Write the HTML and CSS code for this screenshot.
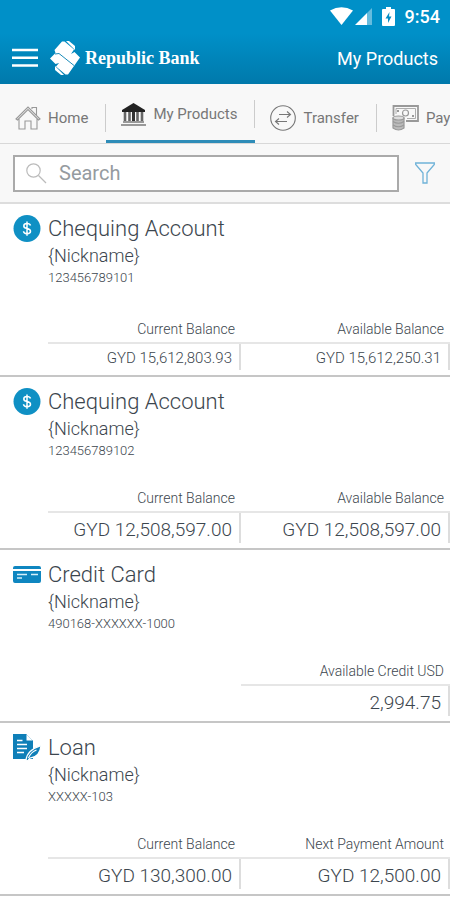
FILE: index.html
```
<!DOCTYPE html>
<html lang="en">
<head>
    <meta charset="UTF-8">
    <meta name="viewport" content="width=device-width, initial-scale=1.0">
    <title>My Products</title>
    <link rel="stylesheet" href="styles.css">
</head>
<body>
    <header class="header">
        <div class="status">
            <svg width="23" height="18" viewBox="0 0 23 18"><path d="M0 3.5Q11.500-3 23 3.500L11.500 18Z" fill="#fff"/></svg>
            <svg width="17" height="17" viewBox="0 0 17 17"><path d="M17 0V17H12V5Z" fill="#fff" opacity=".4"/><path d="M0 17L12 5V17Z" fill="#fff"/></svg>
            <svg class="battery" width="13" height="19" viewBox="0 0 13 19"><path d="M4 0H9V2H12Q13 2 13 3V18Q13 19 12 19H1Q0 19 0 18V3Q0 2 1 2H4Z" fill="#fff"/><path d="M7.500 5L3.500 11.500H6V16L9.500 9.500H7Z" fill="#058cc3"/></svg>
            <span class="clock">9:54</span>
        </div>
        <div class="bar">
            <button class="menu" aria-label="Menu">
                <svg width="26" height="20" viewBox="0 0 26 20" stroke="#fff" stroke-width="2.600"><path d="M0 2H26M0 9.700H26M0 17.500H26"/></svg>
            </button>
            <a class="brand" href="#">
                <svg width="30" height="34" viewBox="0 0 30 34">
                    <path d="M16 0H19L25 5V9Z" fill="#fff"/>
                    <path d="M14 34H11L5 29V25Z" fill="#fff"/>
                    <path d="M12 .500H14.500L24 8.500L21 13L24.500 11L30 16.500L18 33.500H15.500L6 25.500L9 22L5.500 23L0 17.500L5.500 12L4.500 9Z" fill="#fff"/>
                    <path d="M5 13L9 12.500L24 24.500" fill="none" stroke="#1b8cba" stroke-width="1"/>
                </svg>
                <span>Republic Bank</span>
            </a>
            <h1 class="title">My Products</h1>
        </div>
    </header>

    <nav class="tabs">
        <a class="tab" href="#">
            <svg width="26" height="26" viewBox="0 0 26 26" fill="none" stroke="#999" stroke-width="1.100"><path d="M1 14L13 2L25 14L23.500 15L13 4.500L2.500 15ZM4 14V24H10V16H16V24H22V14M17 4V2.500H21.500V10"/></svg>
            <span>Home</span>
        </a>
        <a class="tab active" href="#">
            <svg width="25" height="23" viewBox="0 0 25 23"><path d="M12.500 0L24 7V9H1V7Z" fill="#222"/><path d="M4 9V19M8.500 9V19M16.500 9V19M21 9V19" stroke="#666" stroke-width="2.600"/><path d="M12.500 9V19" stroke="#333" stroke-width="3"/><path d="M2 19H23M0 22H25" stroke="#999" stroke-width="2"/></svg>
            <span>My Products</span>
        </a>
        <a class="tab" href="#">
            <svg width="26" height="26" viewBox="0 0 26 26" fill="none" stroke="#777" stroke-width="1.100"><circle cx="13" cy="13" r="12.300"/><path d="M9 9.500H20M17 6.500L20.500 9.500L17 12.500M17 16.500H6M9 13.500L5.500 16.500L9 19.500"/></svg>
            <span>Transfer</span>
        </a>
        <a class="tab" href="#">
            <svg width="27" height="26" viewBox="0 0 27 26" fill="none" stroke="#999" stroke-width="1.200"><path d="M1.500 11V1H26V16H14" stroke-width="1.800"/><path d="M4 9V3.500H23.500V13.500H15" stroke-width=".8"/><circle cx="13.500" cy="8" r="3"/><path d="M5 6H7M20 11H22" stroke-width="2"/><path d="M1 13V23Q6.500 27 12 23V13Z" fill="#bbb"/><ellipse cx="6.500" cy="13" rx="5.500" ry="2" fill="#ddd"/><path d="M1 16.500Q6.500 20 12 16.500M1 20Q6.500 23.500 12 20"/></svg>
            <span>Pay</span>
        </a>
    </nav>

    <form class="search">
        <label class="search-box">
            <svg width="21" height="21" viewBox="0 0 21 21" fill="none" stroke="#bbb" stroke-width="1.200"><circle cx="7.500" cy="7.500" r="6.700"/><path d="M12.500 12.500L20 20"/></svg>
            <input type="text" placeholder="Search" aria-label="Search">
        </label>
        <button class="filter" type="button" aria-label="Filter">
            <svg width="20" height="22" viewBox="0 0 20 22" fill="none" stroke="#6fb2d8" stroke-width="1.300"><path d="M.700 1H19.300V2.500L12 11V21H8V11L.700 2.500Z"/></svg>
        </button>
    </form>

    <main class="accounts">
        <section class="account">
            <svg class="icon" width="27" height="27" viewBox="0 0 27 27"><circle cx="13.500" cy="13.500" r="13.500" fill="#0f90c4"/><path d="M17 10.500Q16.500 8.500 13.500 8.500Q10.300 8.500 10.300 11Q10.300 13 13.500 13.500Q17 14 17 16.300Q17 18.700 13.500 18.700Q10.200 18.700 10 16.300M13.500 6.500V20.700" fill="none" stroke="#fff" stroke-width="1.500"/></svg>
            <div class="info">
                <h2 class="name">Chequing Account</h2>
                <p class="nickname">{Nickname}</p>
                <p class="number">123456789101</p>
                <dl class="balances small">
                    <div class="balance"><dt>Current Balance</dt><dd>GYD 15,612,803.93</dd></div>
                    <div class="balance"><dt>Available Balance</dt><dd>GYD 15,612,250.31</dd></div>
                </dl>
            </div>
        </section>

        <section class="account">
            <svg class="icon" width="27" height="27" viewBox="0 0 27 27"><circle cx="13.500" cy="13.500" r="13.500" fill="#0f90c4"/><path d="M17 10.500Q16.500 8.500 13.500 8.500Q10.300 8.500 10.300 11Q10.300 13 13.500 13.500Q17 14 17 16.300Q17 18.700 13.500 18.700Q10.200 18.700 10 16.300M13.500 6.500V20.700" fill="none" stroke="#fff" stroke-width="1.500"/></svg>
            <div class="info">
                <h2 class="name">Chequing Account</h2>
                <p class="nickname">{Nickname}</p>
                <p class="number">123456789102</p>
                <dl class="balances">
                    <div class="balance"><dt>Current Balance</dt><dd>GYD 12,508,597.00</dd></div>
                    <div class="balance"><dt>Available Balance</dt><dd>GYD 12,508,597.00</dd></div>
                </dl>
            </div>
        </section>

        <section class="account">
            <svg class="icon" width="28" height="27" viewBox="0 0 28 27"><path d="M0 8V7Q0 5 2 5H26Q28 5 28 7V8ZM0 10H28V20Q28 22 26 22H2Q0 22 0 20Z" fill="#0f86c0"/><path d="M4 13.500H14M18 13.500H25M4 17H9" stroke="#d5effa" stroke-width="1.400"/></svg>
            <div class="info">
                <h2 class="name">Credit Card</h2>
                <p class="nickname">{Nickname}</p>
                <p class="number">490168-XXXXXX-1000</p>
                <dl class="balances">
                    <div class="balance"><dt>Available Credit USD</dt><dd>2,994.75</dd></div>
                </dl>
            </div>
        </section>

        <section class="account">
            <svg class="icon" width="28" height="27" viewBox="0 0 28 27"><path d="M0 0H13L20 7V25H0Z" fill="#0f7fb8"/><path d="M13 0V7H20" fill="#fff" stroke="#0f7fb8"/><path d="M4 6.500H9.500M4 10.500H14M4 14.500H14M4 18.500H11" stroke="#fff" stroke-width="1.500"/><path d="M13 26Q14 16 28 11.500Q27 23 17 24L14.500 27Z" fill="#0f7fb8" stroke="#fff" stroke-width="1.200"/><path d="M15.500 24Q18 18 23.500 16" fill="none" stroke="#fff" stroke-width="1.200"/></svg>
            <div class="info">
                <h2 class="name">Loan</h2>
                <p class="nickname">{Nickname}</p>
                <p class="number">XXXXX-103</p>
                <dl class="balances">
                    <div class="balance"><dt>Current Balance</dt><dd>GYD 130,300.00</dd></div>
                    <div class="balance"><dt>Next Payment Amount</dt><dd>GYD 12,500.00</dd></div>
                </dl>
            </div>
        </section>
    </main>
</body>
</html>
```
FILE: styles.css
```
* {
    box-sizing: border-box;
}
body {
    margin: 0;
    font-family: Roboto, "Liberation Sans", sans-serif;
    color: #3c464e;
    background-color: #fff;
    overflow-x: hidden;
}
h1, h2, p, dl, dd {
    margin: 0;
    font-weight: 400;
}
svg {
    display: block;
    flex-shrink: 0;
}
a {
    color: inherit;
    text-decoration: none;
}
button {
    padding: 0;
    border: 0;
    background: none;
}

/* header */
.header {
    color: #fff;
    background: linear-gradient(#0090c8 40%, #0079ab);
}
.status {
    display: flex;
    justify-content: flex-end;
    align-items: center;
    gap: 2px;
    height: 32px;
    padding-right: 10px;
}
.battery {
    margin: 0 8px;
}
.clock {
    font-size: 18px;
    font-weight: 500;
}
.bar {
    display: flex;
    align-items: center;
    height: 52px;
    padding: 0 12px;
}
.brand {
    display: flex;
    align-items: center;
    gap: 5px;
    margin-left: 12px;
    font-family: "Liberation Serif", serif;
    font-size: 18px;
    font-weight: 700;
}
.title {
    margin-left: auto;
    font-size: 18px;
}

/* tabs */
.tabs {
    display: flex;
    height: 60px;
    overflow: hidden;
    background-color: #f8f8f8;
    border-bottom: 1px solid #d8d8d8;
}
.tab {
    display: flex;
    flex-shrink: 0;
    align-items: center;
    gap: 7px;
    padding: 8px 0 0 15px;
    font-size: 15px;
    color: #777;
}
.tab::after {
    content: "";
    height: 28px;
    margin-left: 10px;
    border-right: 1px solid #ccc;
}
.tab:last-child::after {
    display: none;
}
.tab.active {
    padding-top: 4px;
    border-bottom: 3px solid #2e8cb8;
}

/* search */
.search {
    display: flex;
    align-items: center;
    height: 60px;
    padding: 0 15px 0 13px;
    background-color: #f8f8f8;
    border-bottom: 2px solid #ddd;
}
.search-box {
    display: flex;
    flex: 1;
    align-items: center;
    gap: 12px;
    height: 37px;
    padding: 0 11px;
    background-color: #fff;
    border: 2px solid #aaa;
}
.search-box input {
    flex: 1;
    min-width: 0;
    padding: 0;
    border: 0;
    outline: 0;
    font: 20px Roboto, sans-serif;
    background: none;
}
.search-box input::placeholder {
    color: #959ba0;
}
.filter {
    margin-left: 16px;
}

/* accounts */
.account {
    display: flex;
    gap: 7px;
    min-height: 173px;
    padding: 11px 0 5px 13px;
    border-bottom: 2px solid #c6c6c6;
}
.icon {
    width: 28px;
}
.info {
    display: flex;
    flex: 1;
    flex-direction: column;
}
.name {
    font-size: 22px;
    font-weight: 300;
    line-height: 28px;
}
.nickname {
    font-size: 18px;
    font-weight: 300;
    line-height: 26px;
}
.number {
    font-size: 13px;
    font-weight: 300;
    line-height: 18px;
}
.balances {
    display: flex;
    justify-content: flex-end;
    margin-top: auto;
    text-align: right;
}
.balance {
    width: 52%;
}
.balance:first-child:not(:last-child) {
    width: 48%;
}
.balance dt {
    padding-right: 6px;
    font-size: 14px;
    font-weight: 300;
    line-height: 26px;
    border-bottom: 2px solid #e6e6e6;
}
.balance dd {
    padding: 3px 7px 0 0;
    font-size: 19px;
    font-weight: 300;
    line-height: 27px;
    border-right: 2px solid #ddd;
}
.small dd {
    font-size: 15px;
    line-height: 23px;
}
```
